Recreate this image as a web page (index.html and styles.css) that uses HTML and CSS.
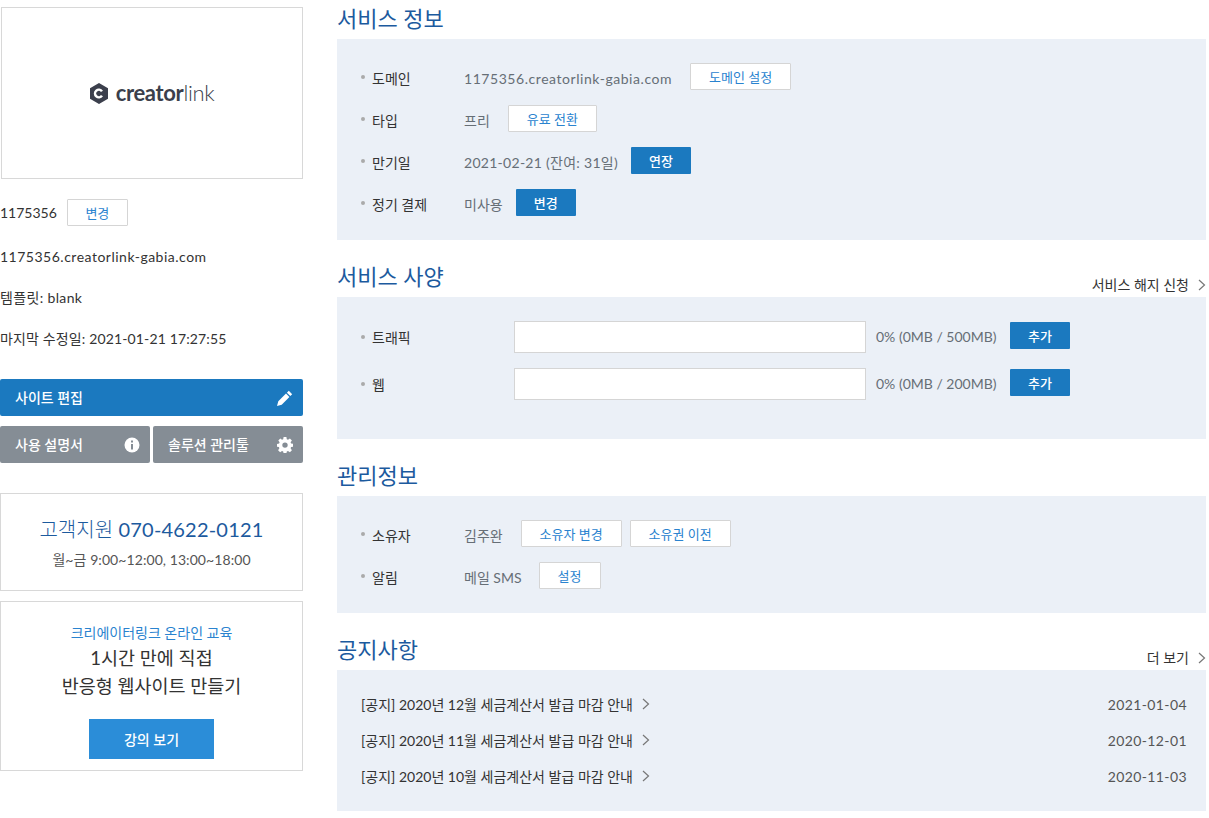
FILE: index.html
```html
<!DOCTYPE html>
<html lang="ko">
<head>
<meta charset="utf-8">
<title>Creatorlink</title>
<link rel="stylesheet" href="styles.css">
</head>
<body>
<div class="page">
  <aside class="side">
    <div class="thumb">
      <svg class="logo-mark" width="18" height="21" viewBox="0 0 18 21"><path fill="#3b3f4c" fill-rule="evenodd" d="M9 0l9 5.200v10.600L9 21 0 15.800V5.200zM13 7.800A5 5 0 1 0 13 13.200L10.900 11.900A2.500 2.500 0 1 1 10.900 9.100z"/></svg>
      <span class="logo-text"><b>creator</b>link</span>
    </div>
    <div class="site-id"><span>1175356</span><a class="btn btn-line btn-side">변경</a></div>
    <p class="meta meta-url">1175356.creatorlink-gabia.com</p>
    <p class="meta meta-tpl">템플릿: blank</p>
    <p class="meta meta-date">마지막 수정일: 2021-01-21 17:27:55</p>
    <a class="action action-blue"><span class="action-text">사이트 편집</span>
      <svg width="16" height="16" viewBox="0 0 16 16"><path fill="#fff" d="M11.800.8l3.400 3.400-1.900 1.900-3.400-3.400zM9 3.600l3.400 3.400-7.700 7.700L0 16l1.300-4.700z"/></svg>
    </a>
    <div class="action-row">
      <a class="action action-grey"><span class="action-text">사용 설명서</span>
        <svg width="16" height="16" viewBox="0 0 16 16"><circle cx="8" cy="8" r="7.500" fill="#fff"/><rect x="7" y="7" width="2" height="5.500" fill="#858d95"/><rect x="7" y="3.500" width="2" height="2" fill="#858d95"/></svg>
      </a>
      <a class="action action-grey"><span class="action-text">솔루션 관리툴</span>
        <svg width="16" height="16" viewBox="0 0 16 16"><path fill="#fff" fill-rule="evenodd" d="M6.600 0h2.800l.4 2.200 1.200.5L12.900 1.400l2 2-1.300 1.900.5 1.200 2.200.4v2.800l-2.200.4-.5 1.200 1.300 1.900-2 2-1.900-1.300-1.200.5-.4 2.200H6.600l-.4-2.200-1.200-.5-1.900 1.300-2-2 1.300-1.900-.5-1.200L-.1 9.700V6.900l2.200-.4.5-1.200L1.300 3.400l2-2L5 2.700l1.200-.5zM8 5.400a2.700 2.700 0 1 0 0 5.400 2.700 2.700 0 0 0 0-5.400z"/></svg>
      </a>
    </div>
    <div class="box box-support">
      <p class="support-tel">고객지원 <span class="tel-num">070-4622-0121</span></p>
      <p class="support-hours">월~금 9:00~12:00, 13:00~18:00</p>
    </div>
    <div class="box box-edu">
      <p class="edu-sub">크리에이터링크 온라인 교육</p>
      <p class="edu-title">1시간 만에 직접<br>반응형 웹사이트 만들기</p>
      <a class="edu-btn">강의 보기</a>
    </div>
  </aside>

  <main class="main">
    <section class="sec sec-first">
      <div class="sec-head"><h2>서비스 정보</h2></div>
      <div class="panel">
        <div class="row"><span class="label">도메인</span><span class="val val-url">1175356.creatorlink-gabia.com</span><a class="btn btn-line gap-18 w-101">도메인 설정</a></div>
        <div class="row"><span class="label">타입</span><span class="val">프리</span><a class="btn btn-line gap-18 w-89">유료 전환</a></div>
        <div class="row"><span class="label">만기일</span><span class="val val-date">2021-02-21 (잔여: 31일)</span><a class="btn btn-solid gap-13">연장</a></div>
        <div class="row"><span class="label">정기 결제</span><span class="val">미사용</span><a class="btn btn-solid gap-13">변경</a></div>
      </div>
    </section>

    <section class="sec">
      <div class="sec-head"><h2>서비스 사양</h2><a class="more">서비스 해지 신청<svg class="chev" width="8" height="12" viewBox="0 0 8 12"><path d="M1 1l5.500 5L1 11" fill="none" stroke="#777" stroke-width="1.200"/></svg></a></div>
      <div class="panel panel-spec">
        <div class="row row-spec"><span class="label label-spec">트래픽</span><span class="bar"></span><span class="val val-spec">0% (0MB / 500MB)</span><a class="btn btn-solid btn-add">추가</a></div>
        <div class="row row-spec"><span class="label label-spec">웹</span><span class="bar"></span><span class="val val-spec">0% (0MB / 200MB)</span><a class="btn btn-solid btn-add">추가</a></div>
      </div>
    </section>

    <section class="sec">
      <div class="sec-head"><h2>관리정보</h2></div>
      <div class="panel">
        <div class="row"><span class="label">소유자</span><span class="val">김주완</span><a class="btn btn-line gap-18 w-101">소유자 변경</a><a class="btn btn-line gap-8 w-101">소유권 이전</a></div>
        <div class="row"><span class="label">알림</span><span class="val">메일 SMS</span><a class="btn btn-line gap-17 w-62">설정</a></div>
      </div>
    </section>

    <section class="sec">
      <div class="sec-head"><h2>공지사항</h2><a class="more">더 보기<svg class="chev" width="8" height="12" viewBox="0 0 8 12"><path d="M1 1l5.500 5L1 11" fill="none" stroke="#777" stroke-width="1.200"/></svg></a></div>
      <div class="panel panel-notice">
        <div class="notice"><span>[공지] 2020년 12월 세금계산서 발급 마감 안내</span><svg class="chev-n" width="8" height="12" viewBox="0 0 8 12"><path d="M1 1l5.500 5L1 11" fill="none" stroke="#777" stroke-width="1.200"/></svg><time>2021-01-04</time></div>
        <div class="notice"><span>[공지] 2020년 11월 세금계산서 발급 마감 안내</span><svg class="chev-n" width="8" height="12" viewBox="0 0 8 12"><path d="M1 1l5.500 5L1 11" fill="none" stroke="#777" stroke-width="1.200"/></svg><time>2020-12-01</time></div>
        <div class="notice"><span>[공지] 2020년 10월 세금계산서 발급 마감 안내</span><svg class="chev-n" width="8" height="12" viewBox="0 0 8 12"><path d="M1 1l5.500 5L1 11" fill="none" stroke="#777" stroke-width="1.200"/></svg><time>2020-11-03</time></div>
      </div>
    </section>
  </main>
</div>
</body>
</html>
```
FILE: styles.css
```css
* { box-sizing: border-box; }
html, body { margin: 0; padding: 0; background: #fff; overflow: hidden; }
body {
  font-family: Lato, "Noto Sans CJK KR", sans-serif;
  font-size: 14px;
  color: #333;
  height: 818px;
}
p { margin: 0; }
.page { display: flex; gap: 34px; align-items: flex-start; width: 1206px; }
.side { width: 303px; flex: none; padding-top: 7px; }
.thumb {
  margin-left: 1px;
  height: 172px;
  border: 1px solid #d8d8d8;
  display: flex;
  align-items: center;
  justify-content: center;
  gap: 8px;
}
.logo-mark { flex: none; }
.logo-text { font-size: 22px; line-height: 24px; color: #3b3f4c; font-weight: 300; letter-spacing: -0.35px; }
.logo-text b { font-weight: 700; }
.site-id { display: flex; align-items: center; height: 27px; margin-top: 20px; gap: 10px; }
.meta { margin-top: 21px; height: 20px; line-height: 20px; }
.meta-url { letter-spacing: .5px; }
.meta-tpl { letter-spacing: .35px; }
.meta-date { letter-spacing: .14px; }
.btn {
  display: inline-flex;
  align-items: center;
  justify-content: center;
  height: 27px;
  width: 60px;
  font-size: 13px;
  border-radius: 1px;
  flex: none;
}
.btn-line { background: #fff; border: 1px solid #d5d5d5; color: #2a83cf; }
.btn-solid { background: #1b79bf; color: #fff; font-weight: 500; }
.btn-side { width: 61px; }
.btn-add { align-self: flex-start; margin-top: 1px; }
.gap-18 { margin-left: 18px; }
.gap-17 { margin-left: 17px; }
.gap-13 { margin-left: 13px; }
.gap-8 { margin-left: 8px; }
.w-101 { width: 101px; }
.w-89 { width: 89px; }
.w-62 { width: 62px; }
.action {
  display: flex;
  align-items: center;
  justify-content: space-between;
  height: 37px;
  padding: 0 10px 0 15px;
  color: #fff;
  font-size: 14px;
  font-weight: 500;
  border-radius: 2px;
}
.action-text { margin-bottom: 2px; }
.action-blue { background: #1b79bf; margin-top: 30px; }
.action-grey { background: #858d95; width: 150px; }
.action-row { display: flex; gap: 3px; margin-top: 10px; }
.box { border: 1px solid #d8d8d8; text-align: center; }
.box-support { height: 98px; margin-top: 30px; padding-top: 21px; }
.support-tel { font-size: 20px; font-weight: 300; line-height: 28px; color: #1c5a9e; }
.tel-num { font-weight: 400; letter-spacing: .2px; }
.support-hours { font-size: 14px; line-height: 20px; margin-top: 7px; color: #555; letter-spacing: .07px; }
.box-edu { height: 170px; margin-top: 10px; padding-top: 21px; }
.edu-sub { font-size: 14px; line-height: 20px; color: #2a83cf; }
.edu-title { font-size: 18.500px; line-height: 28px; color: #333; margin-top: 1px; }
.edu-btn {
  display: flex;
  width: 125px;
  height: 40px;
  margin: 19px auto 0;
  align-items: center;
  justify-content: center;
  background: #2b8dd8;
  color: #fff;
  font-size: 14px;
  font-weight: 500;
}
.main { flex: 1; min-width: 0; }
.sec { margin-top: 18px; }
.sec-first { margin-top: 0; }
.sec-head { display: flex; justify-content: space-between; align-items: flex-end; height: 39px; }
.sec-head h2 { margin: 0; font-size: 22px; font-weight: 400; line-height: 30px; color: #1c5a9e; padding-bottom: 5px; height: 35px; }
.more { font-size: 14px; line-height: 16px; color: #333; display: flex; align-items: center; margin-bottom: 4px; }
.chev { margin-left: 9px; }
.panel { background: #ebf0f7; padding: 24px; display: flex; flex-direction: column; gap: 15px; }
.panel-spec { padding-bottom: 39px; }
.row { display: flex; align-items: center; height: 27px; }
.label { width: 103px; flex: none; font-size: 14px; color: #333; position: relative; padding: 2px 0 0 11px; }
.label::before {
  content: "";
  position: absolute;
  left: 0;
  top: 50%;
  width: 4px;
  height: 4px;
  margin-top: -2px;
  border-radius: 50%;
  background: #aaa;
}
.val { font-size: 14px; color: #666e76; padding-top: 3px; }
.val-url { letter-spacing: .55px; }
.val-date { letter-spacing: .28px; }
.row-spec { height: 32px; }
.label-spec { width: 153px; padding-top: 0; padding-bottom: 1px; }
.bar { width: 352px; height: 32px; background: #fff; border: 1px solid #d5d5d5; }
.val-spec { margin-left: 10px; width: 134px; padding-top: 0; padding-bottom: 2px; }
.panel-notice { padding: 24px 19px 25px 24px; gap: 16px; }
.notice { display: flex; align-items: center; height: 20px; font-size: 14px; color: #333; }
.chev-n { margin-left: 9px; }
.notice time { margin-left: auto; color: #555; letter-spacing: .4px; }
```
